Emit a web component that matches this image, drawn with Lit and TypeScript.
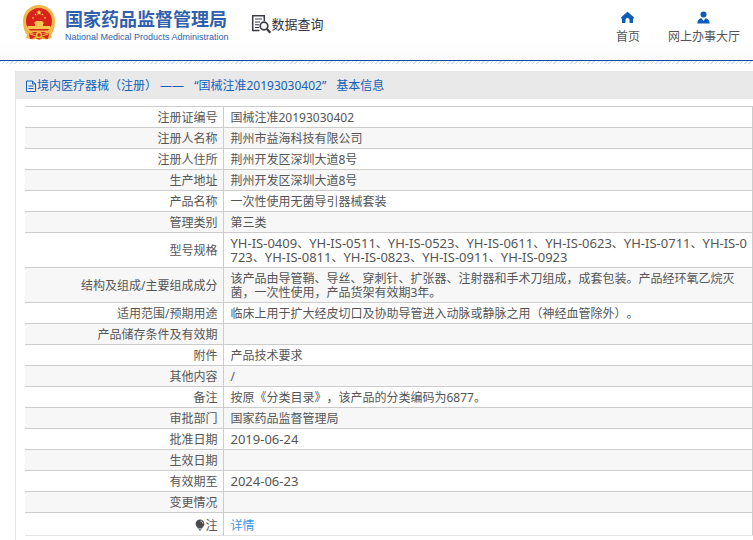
import { LitElement, html, svg, css, nothing } from "lit";
import { customElement, property } from "lit/decorators.js";

interface Row {
  label: string;
  value?: string;
  kind?: "models" | "date" | "link";
}

const ROWS: Row[] = [
  { label: "注册证编号", value: "国械注准20193030402" },
  { label: "注册人名称", value: "荆州市益海科技有限公司" },
  { label: "注册人住所", value: "荆州开发区深圳大道8号" },
  { label: "生产地址", value: "荆州开发区深圳大道8号" },
  { label: "产品名称", value: "一次性使用无菌导引器械套装" },
  { label: "管理类别", value: "第三类" },
  {
    label: "型号规格",
    value:
      "YH-IS-0409、YH-IS-0511、YH-IS-0523、YH-IS-0611、YH-IS-0623、YH-IS-0711、YH-IS-0723、YH-IS-0811、YH-IS-0823、YH-IS-0911、YH-IS-0923",
    kind: "models",
  },
  {
    label: "结构及组成/主要组成成分",
    value:
      "该产品由导管鞘、导丝、穿刺针、扩张器、注射器和手术刀组成，成套包装。产品经环氧乙烷灭菌，一次性使用，产品货架有效期3年。",
  },
  {
    label: "适用范围/预期用途",
    value: "临床上用于扩大经皮切口及协助导管进入动脉或静脉之用（神经血管除外）。",
  },
  { label: "产品储存条件及有效期" },
  { label: "附件", value: "产品技术要求" },
  { label: "其他内容", value: "/" },
  { label: "备注", value: "按原《分类目录》，该产品的分类编码为6877。" },
  { label: "审批部门", value: "国家药品监督管理局" },
  { label: "批准日期", value: "2019-06-24", kind: "date" },
  { label: "生效日期" },
  { label: "有效期至", value: "2024-06-23", kind: "date" },
  { label: "变更情况" },
  { label: "注", value: "详情", kind: "link" },
];

const STAR =
  "M0 -1 L0.225 -0.309 L0.951 -0.309 L0.363 0.118 L0.588 0.809 L0 0.382 L-0.588 0.809 L-0.363 0.118 L-0.951 -0.309 L-0.225 -0.309Z";

const SMALL_STARS = [
  [10, 13],
  [12.5, 9.5],
  [19.5, 9.5],
  [22, 13],
];

@customElement("site-header")
export class SiteHeader extends LitElement {
  static styles = css`
    :host {
      display: block;
    }
    .bar {
      display: flex;
      align-items: flex-start;
      height: 61px;
      box-sizing: border-box;
      padding: 5px 13px 0 23px;
      border-bottom: 1px solid #0d4c9c;
      background: linear-gradient(#fff 60%, #fcfcfc);
    }
    .hatch {
      height: 3px;
      background: repeating-linear-gradient(135deg, #cfe0f3 0 1px, #fff 1px 3px);
    }
    .brand {
      display: flex;
      gap: 10px;
      color: #2f5fad;
      text-decoration: none;
    }
    .emblem {
      width: 32px;
      height: 36px;
    }
    .names {
      display: flex;
      flex-direction: column;
      padding-top: 3px;
    }
    .zh {
      font-size: 18px;
      line-height: 22px;
      font-weight: 700;
    }
    .en {
      font: 400 9px/14px "Liberation Sans", sans-serif;
    }
    .query {
      display: flex;
      align-items: center;
      gap: 1px;
      margin: 0 0 0 22px;
      padding-top: 9px;
      font-size: 13px;
      line-height: 20px;
      font-weight: 400;
      color: #33333f;
    }
    .query svg {
      width: 20px;
      height: 20px;
    }
    nav {
      display: flex;
      gap: 28px;
      margin-left: auto;
      padding-top: 6px;
    }
    .item {
      display: flex;
      flex-direction: column;
      align-items: center;
      gap: 5px;
      font-size: 12px;
      line-height: 16px;
      color: #555;
      text-decoration: none;
      white-space: nowrap;
    }
    .item svg {
      width: 13px;
      height: 13px;
    }
  `;

  render() {
    return html`
      <header class="bar">
        <a class="brand" href="#">
          <svg class="emblem" viewBox="0 0 32 36" aria-hidden="true">
            <path d="M16 0C25 0 32 7 32 16c0 6-1.500 11-4 14l1 3-6 1.500-4-.5-3 1-3-1-4 .5L3 33l1-3C1.500 27 0 22 0 16 0 7 7 0 16 0Z" fill="#f0b848" />
            <circle cx="16" cy="16" r="13" fill="#d8231c" />
            <path d="M6 28.500h20L25 34l-6-1-3 1.500-3-1.500-6 1Z" fill="#d8231c" />
            <path d=${STAR} transform="translate(16 7.500) scale(3)" fill="#f8d34c" />
            ${SMALL_STARS.map(
              ([x, y]) => svg`<path d=${STAR} transform=${`translate(${x} ${y}) scale(1.300)`} fill="#f8d34c" />`
            )}
            <path d="M11 18l2-2h6l2 2-1 1v2h7l1 2-1 1H5l-1-1 1-2h7v-2Z" fill="#f6c650" />
            <path d="M6 25.500h20v1.500H6Z" fill="#f0b848" />
            <circle cx="16" cy="30" r="2.400" fill="#d8231c" stroke="#f1bc43" stroke-width="1.500" />
            <path d="M7 29l6 2M25 29l-6 2M10 33.500l4-1.500M22 33.500l-4-1.500" stroke="#f1bc43" stroke-width="1.300" />
          </svg>
          <span class="names">
            <span class="zh">国家药品监督管理局</span>
            <span class="en">National Medical Products Administration</span>
          </span>
        </a>
        <h1 class="query">
          <svg viewBox="0 0 20 20" fill="none" stroke="#3a3a48" aria-hidden="true">
            <path d="M8.500 16.500H1.700V1.700h11.600V7" stroke-width="1.500" />
            <path d="M4 5h7M4 8h5M4 10.800h4M4 13.500h4" stroke-width="1.100" />
            <circle cx="13" cy="12" r="3.800" stroke-width="1.700" />
            <path d="M15.700 14.800l3.600 4" stroke-width="2.300" />
          </svg>
          <span>数据查询</span>
        </h1>
        <nav>
          <a class="item" href="#">
            <svg viewBox="0 0 13 13" fill="#0f5bb8" aria-hidden="true">
              <path d="M6.500 .8L12.900 6.300V7.500H12V12H8.500V9a2 2 0 0 0-4 0v3H1V7.500H.1V6.300Z" />
            </svg>
            首页
          </a>
          <a class="item" href="#">
            <svg viewBox="0 0 13 13" fill="#0f5bb8" aria-hidden="true">
              <circle cx="6.500" cy="3.500" r="3" />
              <path d="M.3 12.500C.5 9 2 7.600 4.500 7.200L6.500 10l2-2.800c2.500.4 4 1.800 4.200 5.300Z" />
            </svg>
            网上办事大厅
          </a>
        </nav>
      </header>
      <div class="hatch"></div>
    `;
  }
}

@customElement("info-table")
export class InfoTable extends LitElement {
  @property({ attribute: false }) rows: Row[] = [];

  static styles = css`
    :host {
      display: block;
    }
    table {
      width: 100%;
      table-layout: fixed;
      border-collapse: collapse;
      border-right: 1px solid #ccc;
      font-size: 12px;
      line-height: 14px;
      color: #555;
    }
    .labels {
      width: 198px;
    }
    tr {
      border-top: 1px solid #ccc;
    }
    tr:nth-child(even) {
      background: #f7f7f7;
    }
    tr:last-child {
      border-bottom: 1px solid #e4e4e4;
    }
    th,
    td {
      height: 14px;
      padding: 4px 5px 2px 7px;
      font-weight: 400;
      vertical-align: middle;
    }
    tr:last-child > * {
      padding-top: 6px;
    }
    th {
      text-align: right;
      border-right: 1px solid #ccc;
    }
    td {
      text-align: left;
      word-break: break-all;
    }
    .models {
      padding-right: 2px;
    }
    .latin {
      font-size: 13px;
      line-height: 12px;
    }
    .detail {
      color: #4094e4;
      text-decoration: none;
    }
    .bulb {
      width: 10px;
      height: 12px;
      vertical-align: -1px;
    }
  `;

  private value(row: Row) {
    if (!row.value) return nothing;
    if (row.kind === "link") return html`<a class="detail" href="#">${row.value}</a>`;
    if (row.kind === "date") return html`<span class="latin">${row.value}</span>`;
    if (row.kind === "models") {
      return row.value
        .split("、")
        .map((code, i) => html`${i ? "、" : nothing}<span class="latin">${code}</span>`);
    }
    return row.value;
  }

  render() {
    return html`
      <table>
        <colgroup>
          <col class="labels" />
          <col />
        </colgroup>
        <tbody>
          ${this.rows.map(
            (row) => html`<tr>
              <th scope="row">${row.kind === "link"
                ? html`<svg class="bulb" viewBox="0 0 10 12" aria-hidden="true">
                    <path d="M5 .5a4.400 4.400 0 0 1 4.400 4.400C9.400 7 7.500 7.800 7 9.500H3C2.500 7.800.6 7 .6 4.900A4.400 4.400 0 0 1 5 .5Z" fill="#4a4a4a" />
                    <path d="M3.500 10.200h3L5.500 11.500h-1Z" fill="#4a4a4a" />
                    <path d="M5.500 2c1.500.2 2.300 1.100 2.400 2.500" fill="none" stroke="#fff" stroke-width=".8" />
                  </svg>`
                : nothing}${row.label}</th>
              <td class=${row.kind === "models" ? "models" : ""}>${this.value(row)}</td>
            </tr>`
          )}
        </tbody>
      </table>
    `;
  }
}

@customElement("app-root")
export class AppRoot extends LitElement {
  static styles = css`
    :host {
      display: flex;
      flex-direction: column;
      min-height: 100vh;
      background: #fff;
      font-family: "Noto Sans", "Noto Sans CJK SC", sans-serif;
      text-spacing-trim: space-all;
    }
    .panel {
      flex: 1;
      margin: 7px 0 0 15px;
      border-left: 1px solid #e4e4e4;
    }
    .title {
      display: flex;
      align-items: center;
      height: 28px;
      box-sizing: border-box;
      margin: 0 0 7px;
      padding: 2px 0 0 9px;
      background: #e9e9e9;
      color: #1460b8;
      font-size: 12px;
      line-height: 16px;
      font-weight: 400;
    }
    .title svg {
      width: 12px;
      height: 12px;
    }
    .words {
      display: flex;
      gap: 10px;
    }
    .content {
      padding-left: 9px;
    }
  `;

  render() {
    return html`
      <site-header></site-header>
      <main class="panel">
        <h2 class="title">
          <svg viewBox="0 0 12 12" fill="none" stroke="#1460b8" aria-hidden="true">
            <path d="M1.500 1h6l3 3v7.500h-9ZM7.500 1v3h3M3.500 6h5M3.500 8.500h5" />
          </svg>
          <span class="words">
            <span>境内医疗器械（注册） ——</span>
            <span>“国械注准20193030402”</span>
            <span>基本信息</span>
          </span>
        </h2>
        <div class="content">
          <info-table .rows=${ROWS}></info-table>
        </div>
      </main>
    `;
  }
}
